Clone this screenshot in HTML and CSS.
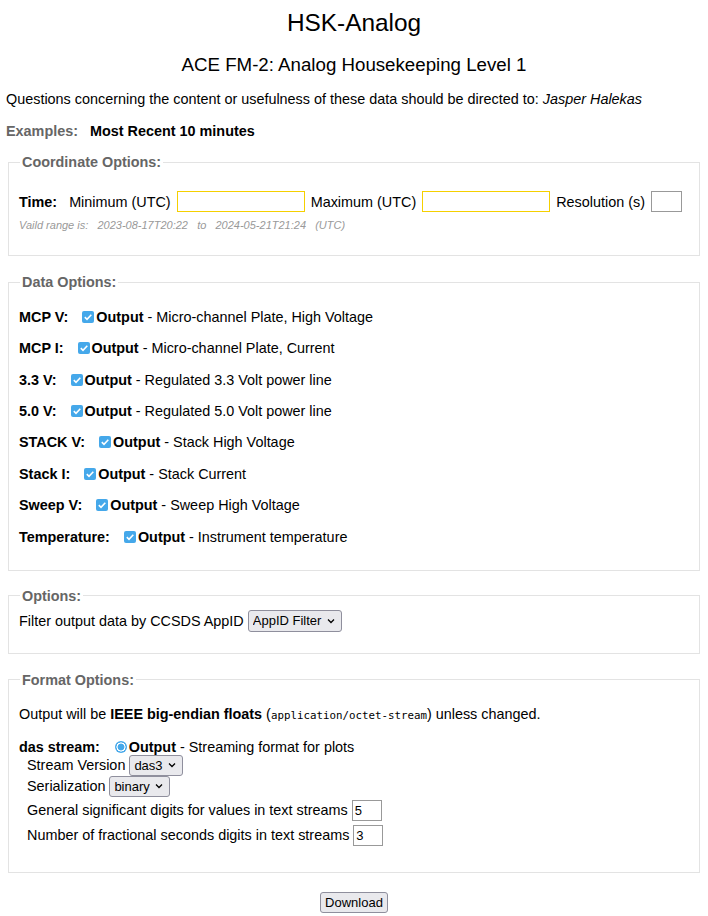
FILE: index.html
```html
<!DOCTYPE html>
<html>
<head>
<meta charset="utf-8">
<link rel="stylesheet" href="styles.css">
</head>
<body>
<h1 class="title">HSK-Analog</h1>
<h2 class="subtitle">ACE FM-2: Analog Housekeeping Level 1</h2>
<p class="contact">Questions concerning the content or usefulness of these data should be directed to: <i>Jasper Halekas</i></p>
<p class="examples"><span class="ex-label">Examples:</span> <a class="ex-link">Most Recent 10 minutes</a></p>

<fieldset class="box box-coord">
  <legend>Coordinate Options:</legend>
  <div class="time-row">
    <b class="lbl">Time:</b>
    <span>Minimum (UTC)</span>
    <input class="tin" type="text">
    <span>Maximum (UTC)</span>
    <input class="tin" type="text">
    <span>Resolution (s)</span>
    <input class="res" type="text">
  </div>
  <div class="range">Vaild range is: &nbsp; 2023-08-17T20:22 &nbsp; to &nbsp; 2024-05-21T21:24 &nbsp; (UTC)</div>
</fieldset>

<fieldset class="box box-data">
  <legend>Data Options:</legend>
  <div class="drow"><b class="dlbl">MCP V:</b><input class="cb" type="checkbox" checked><b>Output</b>&nbsp;- Micro-channel Plate, High Voltage</div>
  <div class="drow"><b class="dlbl">MCP I:</b><input class="cb" type="checkbox" checked><b>Output</b>&nbsp;- Micro-channel Plate, Current</div>
  <div class="drow"><b class="dlbl">3.3 V:</b><input class="cb" type="checkbox" checked><b>Output</b>&nbsp;- Regulated 3.3 Volt power line</div>
  <div class="drow"><b class="dlbl">5.0 V:</b><input class="cb" type="checkbox" checked><b>Output</b>&nbsp;- Regulated 5.0 Volt power line</div>
  <div class="drow"><b class="dlbl">STACK V:</b><input class="cb" type="checkbox" checked><b>Output</b>&nbsp;- Stack High Voltage</div>
  <div class="drow"><b class="dlbl">Stack I:</b><input class="cb" type="checkbox" checked><b>Output</b>&nbsp;- Stack Current</div>
  <div class="drow"><b class="dlbl">Sweep V:</b><input class="cb" type="checkbox" checked><b>Output</b>&nbsp;- Sweep High Voltage</div>
  <div class="drow"><b class="dlbl">Temperature:</b><input class="cb" type="checkbox" checked><b>Output</b>&nbsp;- Instrument temperature</div>
</fieldset>

<fieldset class="box box-opts">
  <legend>Options:</legend>
  <div class="filter">Filter output data by CCSDS AppID <select class="sel"><option>AppID Filter</option></select></div>
</fieldset>

<fieldset class="box box-fmt">
  <legend>Format Options:</legend>
  <p class="fmt-intro">Output will be <b>IEEE big-endian floats</b> (<code>application/octet-stream</code>) unless changed.</p>
  <div class="das"><b class="dlbl">das stream:</b><input class="rb" type="radio" checked><b>Output</b>&nbsp;- Streaming format for plots</div>
  <div class="sub">Stream Version <select class="sel"><option>das3</option></select></div>
  <div class="sub">Serialization <select class="sel"><option>binary</option></select></div>
  <div class="sub sub-in sub-first">General significant digits for values in text streams <input class="num" type="text" value="5"></div>
  <div class="sub sub-in">Number of fractional seconds digits in text streams <input class="num" type="text" value="3"></div>
</fieldset>

<div class="dl"><button class="btn">Download</button></div>
</body>
</html>
```
FILE: styles.css
```css
html, body {
  margin: 0;
  padding: 0;
  background: #fff;
}
body {
  padding: 0 6px;
  font-family: "Liberation Sans", Arial, sans-serif;
  font-size: 14.4px;
  color: #000;
}
.title {
  text-align: center;
  font-size: 24.4px;
  font-weight: normal;
  margin: 8px 0 0;
  line-height: 30px;
}
.subtitle {
  text-align: center;
  font-size: 18.7px;
  font-weight: normal;
  margin: 16px 0 0;
  line-height: 22px;
}
.contact {
  margin: 14px 0 0;
  line-height: 18px;
}
.examples {
  margin: 14px 0 0;
  line-height: 18px;
  font-weight: bold;
}
.ex-label { color: #666; margin-right: 8px; }
.ex-link { color: #000; }

.box {
  margin: 0 2px;
  border: 1px solid #e3e3e3;
  padding: 0 10px;
}
.box legend {
  color: #666;
  font-weight: bold;
  font-size: 14.4px;
  padding: 0 2px;
  margin-left: 1px;
}
.box-coord { margin-top: 14px; padding-top: 21px; padding-bottom: 24px; }
.time-row {
  display: flex;
  align-items: center;
  white-space: nowrap;
}
.time-row .lbl { margin-right: 12px; }
.time-row span { margin-right: 6px; }
.tin {
  width: 124px;
  height: 17px;
  border: 1px solid #f5d000;
  padding: 1px;
  margin: 0 6px 0 0;
  flex: none;
}
.res {
  width: 27px;
  height: 17px;
  border: 1px solid #999;
  padding: 1px;
  margin: 0;
  flex: none;
}
.range {
  margin-top: 7px;
  font-size: 11px;
  font-style: italic;
  color: #999;
}

.box-data { margin-top: 18px; padding-top: 11px; padding-bottom: 17px; }
.drow {
  display: flex;
  align-items: center;
  height: 31.45px;
  white-space: nowrap;
}
.dlbl { margin-right: 14px; }
.cb {
  appearance: none;
  -webkit-appearance: none;
  flex: none;
  margin: 0 2px 0 0;
  width: 12px;
  height: 12px;
  border-radius: 2px;
  background: #45a8ea url("data:image/svg+xml,%3Csvg xmlns='http://www.w3.org/2000/svg' viewBox='0 0 12 12'%3E%3Cpath d='M2.8 6.2 L5 8.3 L9.3 3.8' fill='none' stroke='white' stroke-width='1.6'/%3E%3C/svg%3E") center/12px 12px no-repeat;
}
.rb {
  appearance: none;
  -webkit-appearance: none;
  flex: none;
  margin: 0 2px 0 0;
  width: 12px;
  height: 12px;
  border-radius: 50%;
  background: radial-gradient(circle, #45a8ea 0 3.2px, #fff 3.7px 4.3px, #45a8ea 4.8px);
}

.box-opts { margin-top: 17px; padding-top: 6px; padding-bottom: 21px; }
.filter { display: flex; align-items: center; gap: 4px; white-space: nowrap; }
.sel {
  appearance: none;
  -webkit-appearance: none;
  font-family: "Liberation Sans", Arial, sans-serif;
  font-size: 13px;
  color: #000;
  height: 22px;
  padding: 0 19px 0 4px;
  border: 1px solid #8f8f9d;
  border-radius: 3px;
  background: #e9e9ed url("data:image/svg+xml,%3Csvg xmlns='http://www.w3.org/2000/svg' viewBox='0 0 8 6'%3E%3Cpath d='M1 1.5 L4 4.5 L7 1.5' fill='none' stroke='black' stroke-width='1.3'/%3E%3C/svg%3E") right 6px center/8px 6px no-repeat;
}

.box-fmt { margin-top: 18px; padding-top: 18px; padding-bottom: 26px; }
.fmt-intro { margin: 0 0 17px; }
.fmt-intro code { font-family: "DejaVu Sans Mono", monospace; font-size: 10.8px; }
.das { display: flex; align-items: center; white-space: nowrap; }
.das .dlbl { margin-right: 15px; }
.sub { margin-left: 8px; display: flex; align-items: center; gap: 4px; white-space: nowrap; }
.sub .sel { height: 21px; }
.sub-in { margin-top: 4px; }
.sub-first { margin-top: 3px; }
.num {
  width: 24px;
  height: 17px;
  border: 1px solid #999;
  padding: 1px 2px;
  font-family: "Liberation Sans", Arial, sans-serif;
  font-size: 13px;
}

.dl { text-align: center; margin-top: 19px; }
.btn {
  font-family: "Liberation Sans", Arial, sans-serif;
  font-size: 13px;
  color: #000;
  height: 21px;
  padding: 0 4px;
  border: 1px solid #8f8f9d;
  border-radius: 3px;
  background: #e9e9ed;
}
```
